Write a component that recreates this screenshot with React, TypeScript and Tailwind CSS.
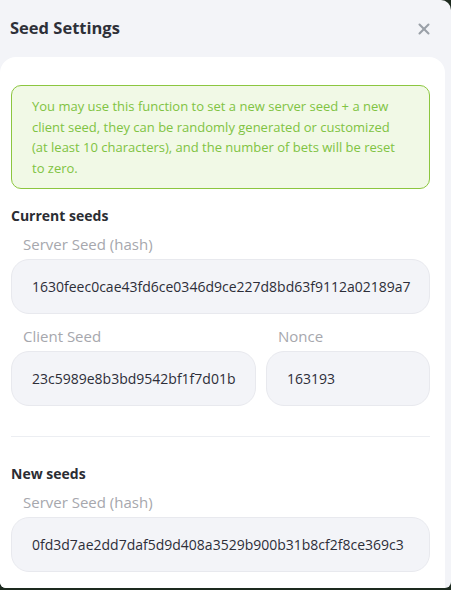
import { X } from "lucide-react";

const font = { fontFamily: '"Open Sans", "Noto Sans", sans-serif' };

function Field({ label, value, className }: { label: string; value: string; className?: string }) {
  return (
    <div className={className}>
      <div className="pl-3 text-[15px] leading-[20px] text-[#a6a7ad]">{label}</div>
      <div className="mt-[5px] flex h-[55px] items-center overflow-hidden whitespace-nowrap rounded-[18px] border border-[#e8e9ee] bg-[#f3f4f8] pl-[20px] pr-[4px] text-[14px] text-[#2d2e38]">
        {value}
      </div>
    </div>
  );
}

export default function App() {
  return (
    <div className="h-[590px] w-[451px] overflow-hidden bg-[#1d2a1f]" style={font}>
      <div className="h-[588px] w-[451px] overflow-hidden rounded-tr-[10px] rounded-b-[6px] bg-[#f3f4f8]">
        <div className="flex h-[57px] items-center justify-between pl-[10px] pr-[18px]">
          <h2 className="text-[16.5px] font-bold text-[#2e3038]">Seed Settings</h2>
          <X className="h-[18px] w-[18px] text-[#9aa0a8]" strokeWidth={2.75} />
        </div>
        <div className="mr-[6px] h-[531px] rounded-t-[16px] bg-white pl-[11px] pr-[15px] pt-[28px]">
          <div className="rounded-[10px] border border-[#8cc63f] bg-[#f1f9e6] py-[10px] pl-[20px] pr-[26px] text-[13px] leading-[20.5px] text-[#80c342]">
            You may use this function to set a new server seed + a new client seed, they can be randomly generated or customized (at least 10 characters), and the number of bets will be reset to zero.
          </div>
          <h3 className="mt-[17px] text-[14px] font-bold leading-[20px] text-[#2b2d33]">Current seeds</h3>
          <Field className="mt-[8px]" label="Server Seed (hash)" value="1630feec0cae43fd6ce0346d9ce227d8bd63f9112a02189a7" />
          <div className="mt-[12px] flex gap-[10px]">
            <Field className="w-[245px]" label="Client Seed" value="23c5989e8b3bd9542bf1f7d01b" />
            <Field className="flex-1" label="Nonce" value="163193" />
          </div>
          <div className="mt-[30px] border-t border-[#eceef2]" />
          <h3 className="mt-[27px] text-[14px] font-bold leading-[20px] text-[#2b2d33]">New seeds</h3>
          <Field className="mt-[8px]" label="Server Seed (hash)" value="0fd3d7ae2dd7daf5d9d408a3529b900b31b8cf2f8ce369c3" />
        </div>
      </div>
    </div>
  );
}
